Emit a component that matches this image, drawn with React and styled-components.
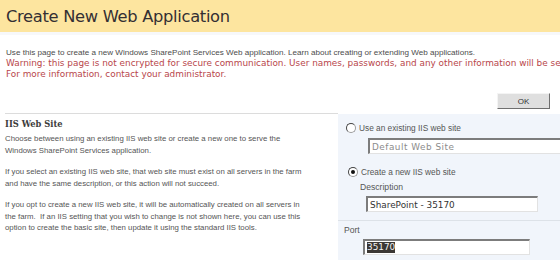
import React from 'react'
import styled, { createGlobalStyle } from 'styled-components'

const GlobalStyle = createGlobalStyle`
  html, body {
    margin: 0;
    padding: 0;
    background: #ffffff;
    overflow: hidden;
  }
`

const Page = styled.div`
  width: 560px;
  height: 260px;
  overflow: hidden;
  font-family: "Liberation Sans", Arial, sans-serif;
  color: #4c4c4c;
`

const TitleBar = styled.div`
  height: 32px;
  background: #fde59f;
  border-bottom: 3px solid #f7f8fa;
  display: flex;
  align-items: center;
  padding-left: 6px;
`

const Title = styled.h1`
  margin: 0;
  font-family: "DejaVu Sans", Verdana, sans-serif;
  font-weight: normal;
  font-size: 16.3px;
  letter-spacing: -0.3px;
  color: #342f33;
`

const Intro = styled.p`
  margin: 12px 0 0;
  padding-left: 6px;
  font-size: 8.1px;
  line-height: 11px;
  white-space: nowrap;
`

const Warning = styled.p`
  margin: 0;
  padding-left: 6px;
  font-family: "DejaVu Sans", Verdana, sans-serif;
  font-size: 8.9px;
  line-height: 11px;
  color: #b8464b;
  white-space: nowrap;
`

const ButtonRow = styled.div`
  display: flex;
  justify-content: flex-end;
  padding-right: 10px;
  margin-top: 13px;
`

const OkButton = styled.button`
  width: 53px;
  height: 16px;
  padding: 0;
  background: #dfdfdf;
  border: 1px solid #f4f4f4;
  border-right-color: #6f6f6f;
  border-bottom-color: #6f6f6f;
  font-family: "Liberation Sans", Arial, sans-serif;
  font-size: 8px;
  color: #333;
`

const Section = styled.div`
  display: grid;
  grid-template-columns: 333px 1fr;
  margin-top: 4px;
  margin-left: 5px;
  height: 150px;
`

const LeftCol = styled.div`
  border-top: 1px solid #dcdcdc;
  padding-top: 5px;
`

const Heading = styled.h3`
  margin: 0 0 3px;
  font-family: "DejaVu Serif", Georgia, serif;
  font-size: 8.3px;
  line-height: 11px;
  font-weight: bold;
  color: #3c3c3c;
`

const Para = styled.p`
  margin: 0 0 10px;
  font-size: 7.8px;
  line-height: 11.5px;
  color: #555;
`

const RightCol = styled.div`
  background: #f1f5fb;
  margin-top: 1px;
  padding-top: 8px;
`

const OptionRow = styled.div`
  display: flex;
  align-items: center;
  gap: 3px;
  height: 12px;
  padding-left: ${({ $indent }) => $indent}px;
  margin-top: ${({ $top }) => $top || 0}px;
  font-size: 8.3px;
  color: #555;
`

const Radio = styled.span`
  width: 8px;
  height: 8px;
  border-radius: 50%;
  background: #fff;
  border: 1px solid #9a9a9a;
  border-top-color: #444;
  border-left-color: #444;
  display: flex;
  align-items: center;
  justify-content: center;
  &::after {
    content: '';
    width: 4px;
    height: 4px;
    border-radius: 50%;
    background: ${({ $checked }) => ($checked ? '#111' : 'transparent')};
  }
`

const FieldLabel = styled.div`
  padding-left: ${({ $indent }) => $indent}px;
  margin-top: ${({ $top }) => $top}px;
  font-size: 8.6px;
  line-height: 11px;
  color: #555;
`

const TextBox = styled.div`
  box-sizing: border-box;
  height: 16px;
  width: ${({ $width }) => $width};
  margin-left: ${({ $indent }) => $indent}px;
  margin-top: ${({ $top }) => $top}px;
  background: #fff;
  border: 1px solid #e2e2e2;
  border-top: 2px solid #7c7c7c;
  border-left: 2px solid #7c7c7c;
  padding-left: 2px;
  display: flex;
  align-items: center;
  font-family: "DejaVu Sans", Verdana, sans-serif;
  font-size: 8.9px;
  letter-spacing: ${({ $disabled }) => ($disabled ? '0.5px' : '0')};
  color: ${({ $disabled }) => ($disabled ? '#8c8c8c' : '#333')};
  white-space: nowrap;
  overflow: hidden;
`

const Selected = styled.span`
  background: #3b3734;
  color: #f2f2f2;
  line-height: 11px;
`

const Divider = styled.div`
  height: 1px;
  background: #dde2e8;
  margin-top: 8px;
`

export default function App() {
  return (
    <Page>
      <GlobalStyle />
      <TitleBar>
        <Title>Create New Web Application</Title>
      </TitleBar>
      <Intro>
        Use this page to create a new Windows SharePoint Services Web application. Learn about creating or extending Web applications.
      </Intro>
      <Warning>
        Warning: this page is not encrypted for secure communication. User names, passwords, and any other information will be sent in clear text.
        <br />
        For more information, contact your administrator.
      </Warning>
      <ButtonRow>
        <OkButton>OK</OkButton>
      </ButtonRow>
      <Section>
        <LeftCol>
          <Heading>IIS Web Site</Heading>
          <Para>
            Choose between using an existing IIS web site or create a new one to serve the
            <br />
            Windows SharePoint Services application.
          </Para>
          <Para>
            If you select an existing IIS web site, that web site must exist on all servers in the farm
            <br />
            and have the same description, or this action will not succeed.
          </Para>
          <Para>
            If you opt to create a new IIS web site, it will be automatically created on all servers in
            <br />
            the farm.&nbsp; If an IIS setting that you wish to change is not shown here, you can use this
            <br />
            option to create the basic site, then update it using the standard IIS tools.
          </Para>
        </LeftCol>
        <RightCol>
          <OptionRow $indent={8}>
            <Radio />
            Use an existing IIS web site
          </OptionRow>
          <TextBox $width="260px" $indent={30} $top={4} $disabled>
            Default Web Site
          </TextBox>
          <OptionRow $indent={10} $top={12}>
            <Radio $checked />
            Create a new IIS web site
          </OptionRow>
          <FieldLabel $indent={22} $top={4}>Description</FieldLabel>
          <TextBox $width="172px" $indent={28} $top={3}>
            SharePoint - 35170
          </TextBox>
          <Divider />
          <FieldLabel $indent={6} $top={4}>Port</FieldLabel>
          <TextBox $width="167px" $indent={25} $top={3}>
            <Selected>35170</Selected>
          </TextBox>
        </RightCol>
      </Section>
    </Page>
  )
}
